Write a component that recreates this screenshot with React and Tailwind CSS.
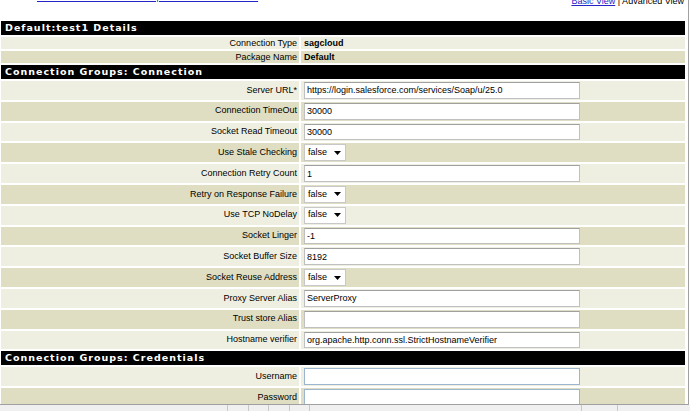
const LIGHT = "bg-[#efefe1]";
const DARK = "bg-[#dfdec3]";

const connectionRows = [
  { label: "Server URL*", type: "text", value: "https://login.salesforce.com/services/Soap/u/25.0" },
  { label: "Connection TimeOut", type: "text", value: "30000" },
  { label: "Socket Read Timeout", type: "text", value: "30000" },
  { label: "Use Stale Checking", type: "select", value: "false" },
  { label: "Connection Retry Count", type: "text", value: "1" },
  { label: "Retry on Response Failure", type: "select", value: "false" },
  { label: "Use TCP NoDelay", type: "select", value: "false" },
  { label: "Socket Linger", type: "text", value: "-1" },
  { label: "Socket Buffer Size", type: "text", value: "8192" },
  { label: "Socket Reuse Address", type: "select", value: "false" },
  { label: "Proxy Server Alias", type: "text", value: "ServerProxy" },
  { label: "Trust store Alias", type: "text", value: "" },
  { label: "Hostname verifier", type: "text", value: "org.apache.http.conn.ssl.StrictHostnameVerifier" },
];

const credentialRows = [
  { label: "Username", type: "text", value: "", blue: true },
  { label: "Password", type: "text", value: "", blue: true },
];

const Header = ({ children }) => (
  <tr>
    <td colSpan={2} className="h-[14px] bg-black pl-[4px] text-white font-bold text-[9.5px] leading-[14px] tracking-[1px] font-['DejaVu_Sans',sans-serif]">
      {children}
    </td>
  </tr>
);

const Field = ({ row }) => {
  if (row.type === "select") {
    return (
      <div className="flex items-center justify-between w-[42px] h-[16.8px] bg-white border border-[#c8c8c8] pl-[3px] pr-[4px]">
        <span>{row.value}</span>
        <svg width="7" height="4" viewBox="0 0 7 4"><path d="M0 0h7L3.5 4z" fill="#000" /></svg>
      </div>
    );
  }
  return (
    <input
      readOnly
      value={row.value}
      className={`block w-[276px] h-[16.8px] bg-white px-[2px] text-[9px] text-black outline-none border ${row.blue ? "border-[#9cb6cf]" : "border-[#c0c0c0] border-t-[#a0a0a0]"}`}
    />
  );
};

const FieldRows = ({ rows }) =>
  rows.map((row, i) => {
    const bg = i % 2 === 0 ? LIGHT : DARK;
    return (
      <tr key={row.label}>
        <td className={`${bg} text-right pr-[2px]`}>{row.label}</td>
        <td className={`${bg} pl-[3px] py-px`}>
          <Field row={row} />
        </td>
      </tr>
    );
  });

export default function App() {
  return (
    <div className="w-[690px] h-[412px] overflow-hidden bg-white font-['Liberation_Sans',Arial,sans-serif] text-[9px] text-black">
      <div className="h-[405px] w-[689px] border-r border-b border-[#a0a0a0] overflow-hidden">
        <div className="flex justify-between h-[19px]">
          <a className="ml-[37px] -mt-[7px] h-[9px] text-[#2323c8] underline leading-[9px]">
            Return to Salesforce.com Adapter for JMS Connections
          </a>
          <div className="-mt-[3px] mr-[4px] leading-[9px]">
            <a className="text-[#2323c8] underline">Basic View</a>
            <span> | Advanced View</span>
          </div>
        </div>
        <table className="w-[688px] -ml-px border-separate border-spacing-[2px]">
          <tbody>
            <Header>Default:test1 Details</Header>
            <tr>
              <td className={`${LIGHT} w-[298px] h-[12px] leading-[12px] text-right pr-[2px]`}>Connection Type</td>
              <td className={`${LIGHT} h-[12px] leading-[12px] pl-[3px] font-bold`}>sagcloud</td>
            </tr>
            <tr>
              <td className={`${DARK} h-[12px] leading-[12px] text-right pr-[2px]`}>Package Name</td>
              <td className={`${DARK} h-[12px] leading-[12px] pl-[3px] font-bold`}>Default</td>
            </tr>
            <Header>Connection Groups: Connection</Header>
            <FieldRows rows={connectionRows} />
            <Header>Connection Groups: Credentials</Header>
            <FieldRows rows={credentialRows} />
          </tbody>
        </table>
      </div>
      <div className="flex h-[6px] bg-[#f0f0f0]">
        <div className="w-[228px] border-r border-[#c8c8c8]" />
        <div className="w-[21px] border-r border-[#c8c8c8]" />
        <div className="w-[20px] border-r border-[#c8c8c8]" />
        <div className="w-[21px] border-r border-[#c8c8c8]" />
        <div className="w-[20px] border-r border-[#c8c8c8]" />
        <div className="w-[272px] border-r border-[#c8c8c8]" />
        <div className="w-[36px] border-r border-[#c8c8c8]" />
      </div>
    </div>
  );
}
